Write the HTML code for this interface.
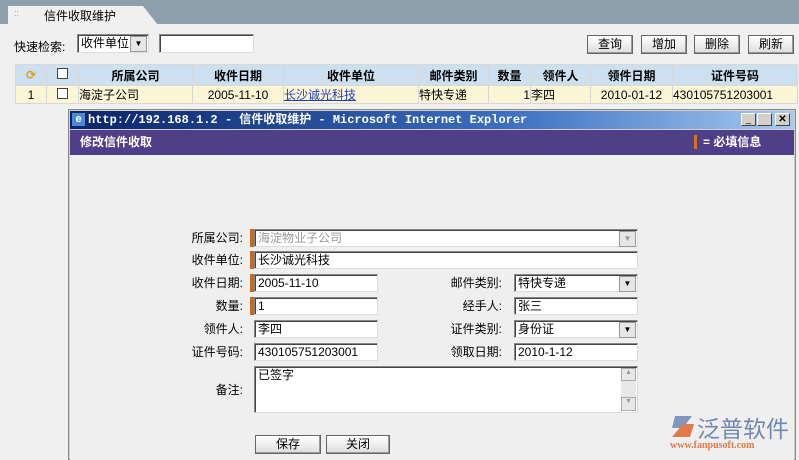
<!DOCTYPE html>
<html><head><meta charset="utf-8"><style>
*{box-sizing:border-box;margin:0;padding:0}
body{width:799px;height:460px;overflow:hidden;background:#f0f0f0;font-family:"Liberation Sans","Noto Sans CJK SC",sans-serif;font-size:12px;color:#000;position:relative}
.a{position:absolute}
.top{left:0;top:0;width:799px;height:24px;background:#8c9faa}
.tab{left:8px;top:6px;width:150px;height:19px;background:#f0f0f0;clip-path:polygon(0 0,135px 0,150px 19px,0 19px);}
.btn{position:absolute;height:19px;border:1px solid #666;background:linear-gradient(#fff,#ddd);text-align:center;line-height:17px;font-size:12px;box-shadow:inset -1px -1px #999}
.inp{position:absolute;height:18px;background:#fff;border:1px solid #888;border-right-color:#ddd;border-bottom-color:#ddd;box-shadow:inset 1px 1px #444;padding-left:3px;line-height:16px;font-size:12px}
table{border-collapse:collapse;position:absolute;left:15px;top:64px;width:783px;table-layout:fixed}
td{border:1px solid #d8d8d8;height:21px;text-align:center;font-size:12px}
th{border:1px solid #d8d8d8;height:21px;background:#cde0ef;font-size:12px}
.row td{background:#fdf6d6;height:18px}
.lbl{position:absolute;text-align:right;width:80px;line-height:18px}
.bar{position:absolute;left:250px;width:4px;height:18px;background:#c46a1f}
.sel::after{content:"▼";position:absolute;right:1px;top:1px;width:15px;height:14px;background:#e6e6e6;border:1px solid #999;font-size:8px;line-height:13px;text-align:center;color:#000}
.dis::after{color:#999}
</style></head><body>
<div class="a top"></div>
<div class="a tab"></div>
<div class="a" style="left:14px;top:8px;color:#999;font-size:9px">::</div>
<div class="a" style="left:44px;top:7px">信件收取维护</div>
<div class="a" style="left:14px;top:38px">快速检索:</div>
<div class="inp sel" style="left:77px;top:34px;width:72px;height:19px">收件单位</div>
<div class="inp" style="left:159px;top:34px;width:95px;height:19px"></div>
<div class="btn" style="left:587px;top:35px;width:46px">查询</div>
<div class="btn" style="left:641px;top:35px;width:46px">增加</div>
<div class="btn" style="left:694px;top:35px;width:46px">删除</div>
<div class="btn" style="left:748px;top:35px;width:46px">刷新</div>
<table>
<colgroup><col style="width:31px"><col style="width:32px"><col style="width:114px"><col style="width:91px"><col style="width:135px"><col style="width:70px"><col style="width:42px"><col style="width:60px"><col style="width:82px"><col></colgroup>
<tr><th style="color:#e0a020">⟳</th><th><span style="display:inline-block;width:11px;height:11px;border:1px solid #444;background:#fff"></span></th><th>所属公司</th><th>收件日期</th><th>收件单位</th><th>邮件类别</th><th>数量</th><th>领件人</th><th>领件日期</th><th>证件号码</th></tr>
<tr class="row"><td>1</td><td><span style="display:inline-block;width:11px;height:11px;border:1px solid #444;background:#fff"></span></td><td style="text-align:left">海淀子公司</td><td>2005-11-10</td><td style="text-align:left;color:#2040c0;text-decoration:underline">长沙诚光科技</td><td style="text-align:left">特快专递</td><td style="text-align:right">1</td><td style="text-align:left">李四</td><td>2010-01-12</td><td style="text-align:left">430105751203001</td></tr>
</table>
<div class="a" style="left:68px;top:109px;width:728px;height:351px;background:#d4d0c8;border:1px solid #888"></div>
<div class="a" style="left:70px;top:111px;width:724px;height:18px;background:linear-gradient(90deg,#0a2468,#3a6ec0 60%,#a6caf0);color:#fff;font-family:'Liberation Mono','Noto Sans CJK SC',monospace;font-weight:bold;line-height:18px;padding-left:18px;font-size:12px">http://192.168.1.2 - 信件收取维护 - Microsoft Internet Explorer</div>
<div class="a" style="left:72px;top:113px;width:13px;height:13px;background:#4a8ad8;color:#fff;font-size:11px;line-height:13px;text-align:center;font-weight:bold">e</div>
<div class="a" style="left:741px;top:113px;width:15px;height:13px;background:#d4d0c8;border:1px solid #fff;border-right-color:#444;border-bottom-color:#444;font-size:9px;text-align:center;line-height:10px">_</div>
<div class="a" style="left:757px;top:113px;width:15px;height:13px;background:#d4d0c8;border:1px solid #fff;border-right-color:#444;border-bottom-color:#444"></div>
<div class="a" style="left:775px;top:113px;width:15px;height:13px;background:#d4d0c8;border:1px solid #fff;border-right-color:#444;border-bottom-color:#444;font-size:10px;text-align:center;line-height:11px;font-weight:bold">✕</div>
<div class="a" style="left:70px;top:130px;width:724px;height:330px;background:#efefef"></div>
<div class="a" style="left:70px;top:130px;width:724px;height:25px;background:#4f3f88;color:#fff;font-weight:bold;line-height:24px;padding-left:10px">修改信件收取</div>
<div class="a" style="left:694px;top:135px;width:3px;height:14px;background:#d87020"></div>
<div class="a" style="left:703px;top:130px;color:#fff;font-weight:bold;line-height:24px">= 必填信息</div>

<div class="lbl" style="left:163px;top:229px">所属公司:</div><div class="bar" style="top:229px"></div>
<div class="inp sel dis" style="left:254px;top:229px;width:384px;color:#999">海淀物业子公司</div>
<div class="lbl" style="left:163px;top:251px">收件单位:</div><div class="bar" style="top:251px"></div>
<div class="inp" style="left:254px;top:251px;width:384px">长沙诚光科技</div>
<div class="lbl" style="left:163px;top:274px">收件日期:</div><div class="bar" style="top:274px"></div>
<div class="inp" style="left:254px;top:274px;width:124px">2005-11-10</div>
<div class="lbl" style="left:163px;top:297px">数量:</div><div class="bar" style="top:297px"></div>
<div class="inp" style="left:254px;top:297px;width:124px">1</div>
<div class="lbl" style="left:163px;top:320px">领件人:</div>
<div class="inp" style="left:254px;top:320px;width:124px">李四</div>
<div class="lbl" style="left:163px;top:343px">证件号码:</div>
<div class="inp" style="left:254px;top:343px;width:124px">430105751203001</div>
<div class="lbl" style="left:422px;top:274px">邮件类别:</div>
<div class="inp sel" style="left:514px;top:274px;width:124px">特快专递</div>
<div class="lbl" style="left:422px;top:297px">经手人:</div>
<div class="inp" style="left:514px;top:297px;width:124px">张三</div>
<div class="lbl" style="left:422px;top:320px">证件类别:</div>
<div class="inp sel" style="left:514px;top:320px;width:124px">身份证</div>
<div class="lbl" style="left:422px;top:343px">领取日期:</div>
<div class="inp" style="left:514px;top:343px;width:124px">2010-1-12</div>
<div class="lbl" style="left:163px;top:381px">备注:</div>
<div class="inp" style="left:254px;top:366px;width:384px;height:47px">已签字</div>
<div class="a" style="left:621px;top:368px;width:15px;height:43px;background:#e8e8e8"></div>
<div class="a" style="left:621px;top:368px;width:15px;height:13px;border:1px solid #aaa;font-size:7px;text-align:center;color:#999">▲</div>
<div class="a" style="left:621px;top:397px;width:15px;height:14px;border:1px solid #aaa;font-size:7px;text-align:center;color:#999">▼</div>
<div class="btn" style="left:255px;top:435px;width:66px">保存</div>
<div class="btn" style="left:326px;top:435px;width:64px">关闭</div>
<svg class="a" style="left:668px;top:414px" width="28" height="26"><path d="M7 2h17l-9 12h-11z" fill="#8098c0"/><path d="M15 10h11l-4 13h-18z" fill="#e07a4a"/></svg>
<div class="a" style="left:697px;top:410px;font-size:23px;color:#7088b0;letter-spacing:0px">泛普软件</div>
<div class="a" style="left:670px;top:440px;font-size:10px;color:#e07a4a;font-family:'Liberation Serif',serif;font-weight:bold">www.fanpusoft.com</div>
</body></html>
